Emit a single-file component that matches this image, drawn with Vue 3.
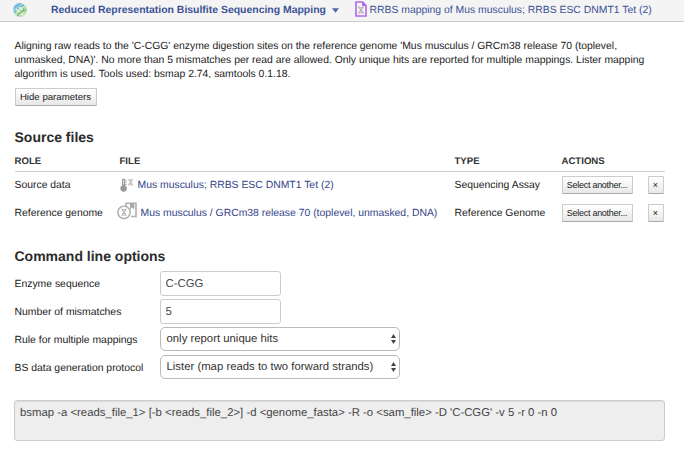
<script setup>
import { ref } from 'vue'

const files = [
  { role: 'Source data', kind: 'assay', name: 'Mus musculus; RRBS ESC DNMT1 Tet (2)', type: 'Sequencing Assay' },
  { role: 'Reference genome', kind: 'genome', name: 'Mus musculus / GRCm38 release 70 (toplevel, unmasked, DNA)', type: 'Reference Genome' },
]
const enzyme = ref('C-CGG')
const mismatches = ref('5')
const command = "bsmap -a <reads_file_1> [-b <reads_file_2>] -d <genome_fasta> -R -o <sam_file> -D 'C-CGG' -v 5 -r 0 -n 0"
</script>

<template>
  <div class="page">
    <header class="bar">
      <svg class="globe" width="16" height="16" viewBox="0 0 16 16" fill="none">
        <circle cx="8" cy="8" r="7" fill="#bfe3e2" />
        <path d="M2 4.5Q5 .5 10 1.2Q8 4 4 6L1.2 9Z" fill="#74bdd4" />
        <path d="M3 12Q7 5 14 4.5Q16 8 13 12Q9 16 5 14Z" fill="#c3e196" />
        <path d="M2.5 11Q5 5 12 3.2M5.5 14Q8 8.5 14.6 8" stroke="#5ba9c9" stroke-width="1.2" />
        <path d="M4 7L8 10M7 5L11 8M8 10L11 13" stroke="#f0f9f2" stroke-width="1.1" />
        <path d="M6 12Q10 11 12 6" stroke="#6dbd90" stroke-width="1.1" />
      </svg>
      <a class="title">Reduced Representation Bisulfite Sequencing Mapping</a>
      <svg class="caret" width="7" height="5" viewBox="0 0 7 5"><path d="M0 .3H7L3.5 4.7Z" fill="#4e67a6" /></svg>
      <svg class="doc" width="12" height="16" viewBox="0 0 12 16" fill="none">
        <path d="M1 1H7.5L11 4.5V15H1Z" fill="#f7f3fa" stroke="#b16ae6" stroke-width="1.6" />
        <path d="M7.5 1V4.5H11Z" fill="#b16ae6" stroke="#b16ae6" />
        <path d="M3.5 5.3Q4 8 6 9Q8 10 8.5 12.9M8.5 5.3Q8 8 6 9Q4 10 3.5 12.9M3.5 6.4H8.5M4.5 7.8H7.5M4.5 10.4H7.5M3.5 11.8H8.5" stroke="#aaa" stroke-width=".8" />
      </svg>
      <a class="crumb">RRBS mapping of Mus musculus; RRBS ESC DNMT1 Tet (2)</a>
    </header>

    <main>
      <p class="about">
        Aligning raw reads to the 'C-CGG' enzyme digestion sites on the reference genome 'Mus musculus / GRCm38 release 70 (toplevel,<br />
        unmasked, DNA)'. No more than 5 mismatches per read are allowed. Only unique hits are reported for multiple mappings. Lister mapping<br />
        algorithm is used. Tools used: bsmap 2.74, samtools 0.1.18.
      </p>
      <button class="btn hide">Hide parameters</button>

      <h2 class="files-title">Source files</h2>
      <div class="row head">
        <span>ROLE</span><span>FILE</span><span>TYPE</span><span>ACTIONS</span>
      </div>
      <div v-for="f in files" :key="f.role" class="row" :class="f.kind">
        <span class="role">{{ f.role }}</span>
        <span class="file">
          <svg v-if="f.kind === 'assay'" width="14" height="14" viewBox="0 0 14 14" fill="none">
            <path d="M2 2A1.6 1.6 0 0 1 5.2 2V7.5A3.3 3.3 0 1 1 2 7.5Z" fill="#999" />
            <path d="M3.6 2V6.5" stroke="#f4f4f4" stroke-width=".9" />
            <path d="M5 2.5H6.6M5 4.5H6.6M5 6.5H6.6" stroke="#999" stroke-width=".8" />
            <path d="M8.7 1Q9 3 10.5 4Q12.3 5 12.6 7.5M12.6 1Q12.3 3 10.5 4Q9 5 8.7 7.5M8.7 1.8H12.6M9.2 3H12M9.2 5.4H12M8.7 6.7H12.6" stroke="#aaa" stroke-width=".7" />
          </svg>
          <svg v-else width="20" height="18" viewBox="0 0 20 18" fill="none">
            <path d="M9 4V1.2H19V14.5H14" stroke="#b0b0b0" stroke-width="1.6" />
            <path d="M13 1H17.4V7.4L15.2 5.6L13 7.4Z" fill="#aaa" />
            <circle cx="7" cy="10.3" r="6.2" fill="#fff" stroke="#aaa" stroke-width="1.4" />
            <path d="M5 6.5Q5 9 7 10.2Q9 11.5 9 14M9 6.5Q9 9 7 10.2Q5 11.5 5 14M5 7.6H9M5.6 9H8.4M5.6 11.5H8.4M5 13H9" stroke="#aaa" stroke-width=".8" />
          </svg>
          <a>{{ f.name }}</a>
        </span>
        <span class="type">{{ f.type }}</span>
        <span class="actions">
          <button class="btn select">Select another...</button>
          <button class="btn remove">×</button>
        </span>
      </div>

      <h2 class="options-title">Command line options</h2>
      <div class="options">
        <label>Enzyme sequence</label>
        <input v-model="enzyme" />
        <label>Number of mismatches</label>
        <input v-model="mismatches" />
        <label>Rule for multiple mappings</label>
        <div class="picker">
          <span>only report unique hits</span>
          <svg width="5" height="10" viewBox="0 0 5 10"><path d="M0 4L2.5 0L5 4ZM0 6H5L2.5 10Z" fill="#444" /></svg>
        </div>
        <label>BS data generation protocol</label>
        <div class="picker">
          <span>Lister (map reads to two forward strands)</span>
          <svg width="5" height="10" viewBox="0 0 5 10"><path d="M0 4L2.5 0L5 4ZM0 6H5L2.5 10Z" fill="#444" /></svg>
        </div>
      </div>
      <div class="command">{{ command }}</div>
    </main>
  </div>
</template>

<style>
body { margin: 0; background: #fff; }
</style>

<style scoped>
* { box-sizing: border-box; }
.page { width: 684px; height: 451px; overflow: hidden; font: 10.4px/14px "Liberation Sans", Arial, sans-serif; text-rendering: geometricPrecision; color: #222; white-space: nowrap; }
.bar { height: 22px; display: flex; align-items: center; background: #f4f4f4; border-bottom: 1px solid #ccc; padding: 0 0 2px 12px; }
a { color: #34458a; }
.bar a { color: #3b5296; padding-top: 2px; }
.globe { margin-right: 23px; flex: none; }
.title { width: 281px; font-size: 10.45px; font-weight: bold; flex: none; }
.caret { flex: none; margin: 2px 16px 0 0; }
.doc { flex: none; margin: -1px 2.5px 0 0; }
main { padding: 18px 19px 0 14.5px; }
.about { margin: 0; height: 48px; }
.btn { display: block; font: 9.65px/12px "Liberation Sans", Arial, sans-serif; color: #222; padding: 0; border: 1px solid #ccc; border-bottom-color: #aaa; border-radius: 1px; background: linear-gradient(#fff, #e8e8e8); text-align: center; white-space: nowrap; overflow: hidden; }
.hide { width: 82px; height: 18px; }
h2 { font-size: 14px; line-height: 18px; margin: 0; color: #2c2c2c; }
.files-title { margin-top: 22px; }
.row { display: grid; grid-template-columns: 105px 335px 107px 1fr; align-items: center; height: 28px; padding-bottom: 2px; }
.head { height: 26px; border-bottom: 1px solid #ccc; font-weight: bold; font-size: 9.6px; color: #333; padding: 7px 0 0; }
.file { display: flex; align-items: center; }
.file a { padding-top: 1px; }
.role { padding-top: 2px; }
.type { padding-top: 1px; }
.assay svg { margin-right: 4px; }
.genome svg { margin: -4px 4px 0 -3px; }
.actions { display: flex; gap: 15px; }
.select { width: 71px; height: 18px; font-size: 9px; letter-spacing: -.26px; }
.remove { width: 16px; height: 18px; font-size: 9px; }
.options-title { margin-top: 19px; }
.options { margin-top: 6px; display: grid; grid-template-columns: 145px 1fr; grid-auto-rows: 28px; }
.options label { padding-top: 7px; }
input { width: 121px; height: 25px; border: 1px solid #ccc; border-radius: 3px; padding: 1px 5px 0; font: 11.35px/16px "Liberation Sans", Arial, sans-serif; text-rendering: geometricPrecision; color: #444; background: #fff; }
.picker { width: 240px; height: 24px; border: 1px solid #bbb; border-radius: 5px; padding: 0 3px 0 6px; display: flex; justify-content: space-between; align-items: center; font-size: 11.35px; color: #333; }
.command { margin: 17px 0 0 -.5px; width: 651px; height: 41px; border: 1px solid #ccc; border-radius: 3px; background: #eee; padding: 5px; font-size: 11.35px; color: #444; box-shadow: inset 0 1px 1px #ddd; }
</style>
